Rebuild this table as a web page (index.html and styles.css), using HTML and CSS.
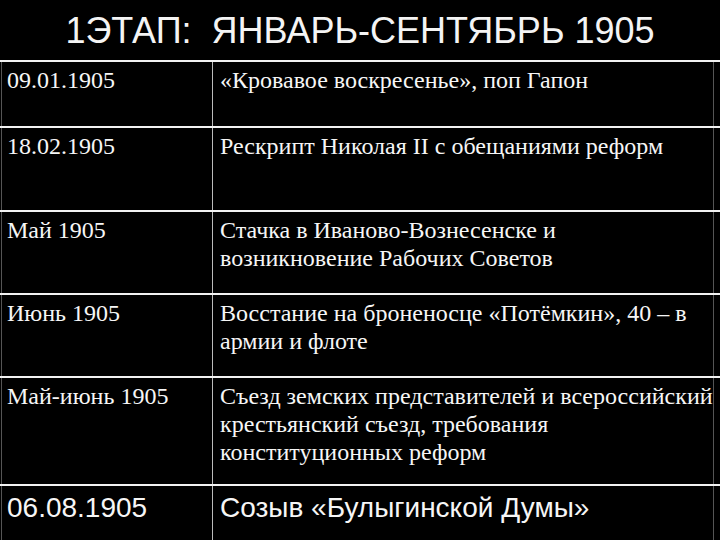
FILE: index.html
```html
<!DOCTYPE html>
<html lang="ru">
<head>
<meta charset="utf-8">
<link rel="stylesheet" href="styles.css">
</head>
<body>
<div class="slide">
  <h1 class="title">1ЭТАП:  ЯНВАРЬ-СЕНТЯБРЬ 1905</h1>
  <div class="table">
    <div class="row r1"><div class="c date">09.01.1905</div><div class="c ev">«Кровавое воскресенье», поп Гапон</div></div>
    <div class="row r2"><div class="c date">18.02.1905</div><div class="c ev">Рескрипт Николая II с обещаниями реформ</div></div>
    <div class="row r3"><div class="c date">Май 1905</div><div class="c ev">Стачка в Иваново-Вознесенске и<br>возникновение Рабочих Советов</div></div>
    <div class="row r4"><div class="c date">Июнь 1905</div><div class="c ev">Восстание на броненосце «Потёмкин», 40 – в<br>армии и флоте</div></div>
    <div class="row r5"><div class="c date">Май-июнь 1905</div><div class="c ev">Съезд земских представителей и всероссийский<br>крестьянский съезд, требования<br>конституционных реформ</div></div>
    <div class="row r6 sans"><div class="c date">06.08.1905</div><div class="c ev">Созыв «Булыгинской Думы»</div></div>
  </div>
</div>
</body>
</html>
```
FILE: styles.css
```css
html, body {
  margin: 0;
  padding: 0;
  background: #000;
}
.slide {
  width: 720px;
  height: 540px;
  overflow: hidden;
  background: #000;
  color: #fff;
}
.title {
  margin: 0;
  height: 60px;
  box-sizing: border-box;
  padding-top: 11px;
  font-family: "Liberation Sans", Arial, sans-serif;
  font-weight: normal;
  font-size: 36px;
  line-height: 40px;
  text-align: center;
  white-space: pre;
  color: #f4f4f4;
}
.table {
  width: 720px;
}
.row {
  display: flex;
  box-sizing: border-box;
  border-top: 2px solid #f2f2f2;
  padding-right: 6px;
}
.r1 { height: 66px; }
.r2 { height: 84px; }
.r3 { height: 83px; }
.r4 { height: 83px; }
.r5 { height: 108px; }
.r6 { height: 60px; }
.c {
  box-sizing: border-box;
  font-family: "Liberation Serif", "Times New Roman", serif;
  font-size: 24px;
  line-height: 28px;
  padding-top: 4px;
  color: #f6f6f6;
  white-space: nowrap;
}
.date {
  width: 211px;
  margin-left: 1px;
  border-left: 1px solid #555;
  padding-left: 5px;
}
.ev {
  flex: 1;
  border-left: 1px solid #bbb;
  border-right: 1px solid #555;
  padding-left: 7px;
}
.sans .c {
  font-family: "Liberation Sans", Arial, sans-serif;
  font-size: 28px;
  line-height: 32px;
  padding-top: 6px;
}
```
